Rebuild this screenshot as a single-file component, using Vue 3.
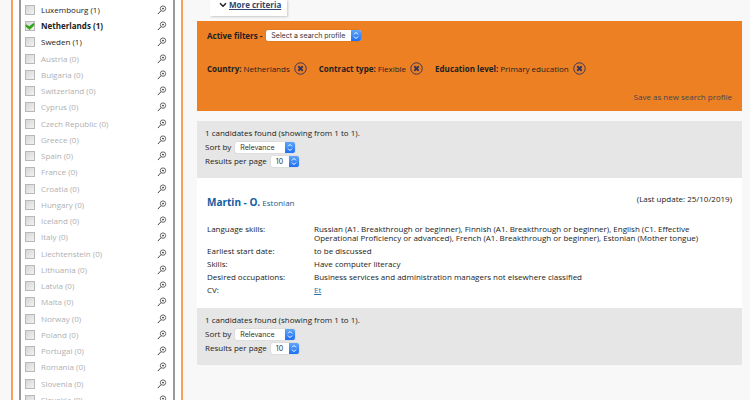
<template>
  <div class="page">
    <aside class="sidebar">
      <ul class="country-list">
        <li v-for="c in countries" :key="c.name" class="country-row" :class="{ empty: !c.count, active: c.name === 'Netherlands' }">
          <label class="country-label">
            <input v-model="selected" type="checkbox" :value="c.name" class="country-check" />
            <svg class="tick" viewBox="0 0 10 10" aria-hidden="true">
              <path d="M0.8 3.2 L4.4 5.2 L8.8 1.8 L9.4 4.2 L4.6 9 L0.6 5.4 Z" fill="#35a51c" />
            </svg>
            <span>{{ c.name }} ({{ c.count }})</span>
          </label>
          <button class="icon-btn" type="button" :aria-label="'Search in ' + c.name">
            <svg width="10" height="10" viewBox="0 0 10 10" fill="none" stroke="#444">
              <circle cx="6" cy="3.6" r="2.7" stroke-width="0.8" />
              <path d="M5.2 3.6 H6.8 M6 2.8 V4.4" stroke-width="1" />
              <path d="M4 5.7 L0.8 9.1" stroke-width="1" />
            </svg>
          </button>
        </li>
      </ul>
    </aside>

    <main class="content">
      <a href="#" class="more-criteria">
        <svg width="8" height="6" viewBox="0 0 8 6" fill="none" stroke="#222" stroke-width="1.5">
          <path d="M1 1.3 L4 4.3 L7 1.3" />
        </svg>
        <span>More criteria</span>
      </a>

      <section class="filters">
        <div class="filters-head">
          <label for="profile">Active filters -</label>
          <span class="select-box profile">
            <select id="profile">
              <option>Select a search profile</option>
            </select>
            <svg class="arrows" viewBox="0 0 10 11"><path d="M3 4.4 L5 2.4 L7 4.4 M3 6.6 L5 8.6 L7 6.6" /></svg>
          </span>
        </div>
        <div class="filter-tags">
          <div v-for="f in filters" :key="f.label" class="filter-tag">
            <span><b>{{ f.label }}:</b> {{ f.value }}</span>
            <button class="icon-btn" type="button" :aria-label="'Remove ' + f.label">
              <svg width="13" height="13" viewBox="0 0 13 13" fill="none" stroke="#35365e">
                <circle cx="6.5" cy="6.5" r="5.7" stroke-width="1" />
                <path d="M4.3 4.3 L8.7 8.7 M8.7 4.3 L4.3 8.7" stroke-width="2" />
              </svg>
            </button>
          </div>
        </div>
        <a href="#" class="save-link">Save as new search profile</a>
      </section>

      <div class="results">
        <template v-for="pos in ['top', 'bottom']" :key="pos">
          <div class="pager">
            <div class="pager-row">1 candidates found (showing from 1 to 1).</div>
            <div class="pager-row">
              <label :for="'sort-' + pos">Sort by</label>
              <span class="select-box sort">
                <select :id="'sort-' + pos">
                  <option>Relevance</option>
                </select>
                <svg class="arrows" viewBox="0 0 10 11"><path d="M3 4.4 L5 2.4 L7 4.4 M3 6.6 L5 8.6 L7 6.6" /></svg>
              </span>
            </div>
            <div class="pager-row">
              <label :for="'per-page-' + pos">Results per page</label>
              <span class="select-box per-page">
                <select :id="'per-page-' + pos">
                  <option>10</option>
                </select>
                <svg class="arrows" viewBox="0 0 10 11"><path d="M3 4.4 L5 2.4 L7 4.4 M3 6.6 L5 8.6 L7 6.6" /></svg>
              </span>
            </div>
          </div>

          <article v-if="pos === 'top'" class="candidate">
            <header class="candidate-head">
              <a href="#" class="candidate-name"><strong>Martin - O.</strong> <span>Estonian</span></a>
              <span>(Last update: 25/10/2019)</span>
            </header>
            <dl class="details">
              <template v-for="d in details" :key="d.label">
                <dt>{{ d.label }}:</dt>
                <dd>{{ d.value }}</dd>
              </template>
              <dt>CV:</dt>
              <dd><a href="#" class="cv-link">Et</a></dd>
            </dl>
          </article>
        </template>
      </div>
    </main>
  </div>
</template>

<script setup>
import { ref } from 'vue';

const selected = ref(['Netherlands']);

const emptyCountries = [
  'Austria', 'Bulgaria', 'Switzerland', 'Cyprus', 'Czech Republic', 'Greece',
  'Spain', 'France', 'Croatia', 'Hungary', 'Iceland', 'Italy', 'Liechtenstein',
  'Lithuania', 'Latvia', 'Malta', 'Norway', 'Poland', 'Portugal', 'Romania',
  'Slovenia', 'Slovakia'
];

const countries = [
  { name: 'Luxembourg', count: 1 },
  { name: 'Netherlands', count: 1 },
  { name: 'Sweden', count: 1 },
  ...emptyCountries.map((name) => ({ name, count: 0 }))
];

const filters = [
  { label: 'Country', value: 'Netherlands' },
  { label: 'Contract type', value: 'Flexible' },
  { label: 'Education level', value: 'Primary education' }
];

const details = [
  {
    label: 'Language skills',
    value: 'Russian (A1. Breakthrough or beginner), Finnish (A1. Breakthrough or beginner), English (C1. Effective Operational Proficiency or advanced), French (A1. Breakthrough or beginner), Estonian (Mother tongue)'
  },
  { label: 'Earliest start date', value: 'to be discussed' },
  { label: 'Skills', value: 'Have computer literacy' },
  { label: 'Desired occupations', value: 'Business services and administration managers not elsewhere classified' }
];
</script>

<style>
body {
  margin: 0;
  background: #f8f8f8;
}
</style>

<style scoped>
.page {
  display: flex;
  height: 100vh;
  overflow: hidden;
  box-sizing: border-box;
  padding: 0 8px 0 11px;
  gap: 14px;
  font-family: "Open Sans", sans-serif;
  font-size: 8px;
  line-height: 10px;
  color: #222;
}

.sidebar {
  flex: none;
  align-self: flex-start;
  box-sizing: border-box;
  width: 172px;
  padding: 0 6px;
  border: solid #f9a15a;
  border-width: 0 2px;
  background: #fff;
}

.country-list {
  display: grid;
  grid-auto-rows: 16px 16px 16px 17px;
  margin: 0;
  padding: 2px 6px 0 4px;
  list-style: none;
  border: solid #999;
  border-width: 0 2px;
}

.country-row {
  display: flex;
  align-items: center;
  justify-content: space-between;
}

.country-row.empty {
  color: #b0b0b0;
}

.country-row.active {
  font-weight: 700;
}

.country-label {
  display: flex;
  align-items: center;
  position: relative;
  gap: 6px;
}

.country-check {
  appearance: none;
  box-sizing: border-box;
  width: 10px;
  height: 10px;
  margin: 0;
  border: 1px solid #b8b8b8;
  background: linear-gradient(135deg, #d6d6d6, #f2f2f2);
}

.tick {
  display: none;
  position: absolute;
  left: 0;
  width: 10px;
  height: 10px;
  pointer-events: none;
}

.country-check:checked + .tick {
  display: block;
}

.icon-btn {
  display: flex;
  padding: 0;
  border: none;
  background: none;
  cursor: pointer;
}

.content {
  flex: 1;
  min-width: 0;
}

.more-criteria {
  display: flex;
  align-items: center;
  width: fit-content;
  margin: 0 0 5px 13px;
  padding: 0 6px 6px 9px;
  gap: 2px;
  background: #fff;
  box-shadow: 1px 1px 2px rgba(0, 0, 0, 0.2);
  color: #2f4770;
  font-weight: 700;
  text-decoration: none;
}

.more-criteria span {
  text-decoration: underline;
}

.filters {
  display: flex;
  flex-direction: column;
  margin-bottom: 10px;
  padding: 9px 10px;
  background: #ec8022;
}

.filters-head {
  display: flex;
  align-items: center;
  gap: 4px;
  font-weight: 700;
}

.filter-tags {
  display: flex;
  flex-wrap: wrap;
  gap: 12px;
  margin: 21px 0 17px;
}

.filter-tag {
  display: flex;
  align-items: center;
  gap: 4px;
}

.save-link {
  align-self: flex-end;
  color: #444654;
  text-decoration: none;
}

.select-box {
  display: inline-flex;
  position: relative;
  height: 11px;
  border-radius: 2px;
  overflow: hidden;
  box-shadow: 0 0 1px rgba(0, 0, 0, 0.4);
}

.select-box select {
  appearance: none;
  width: 100%;
  padding: 0 12px 0 5px;
  border: none;
  background: #fff;
  color: #333;
  font-family: Inter, sans-serif;
  font-size: 7px;
  line-height: 11px;
}

.arrows {
  position: absolute;
  top: 0;
  right: 0;
  width: 10px;
  height: 11px;
  background: linear-gradient(#5fa6fa, #1f6ff5);
  fill: none;
  stroke: #fff;
  stroke-width: 1;
  pointer-events: none;
}

.profile {
  width: 95px;
}

.sort {
  width: 60px;
}

.per-page {
  width: 28px;
}

.pager {
  display: flex;
  flex-direction: column;
  padding: 5px 8px 10px;
  background: #e6e6e6;
}

.pager-row {
  display: flex;
  align-items: center;
  height: 14px;
  gap: 4px;
}

.candidate {
  padding: 16px 10px 14px;
  background: #fff;
}

.candidate-head {
  display: flex;
  justify-content: space-between;
  margin-bottom: 13px;
}

.candidate-name {
  color: #28588f;
  line-height: 16px;
  text-decoration: none;
}

.candidate-name strong {
  color: #125c9f;
  font-size: 10px;
}

.details {
  display: grid;
  grid-template-columns: 103px 1fr;
  gap: 4px;
  margin: 0;
  line-height: 9px;
}

.details dd {
  margin: 0;
}

.cv-link {
  color: #2374b5;
}
</style>
